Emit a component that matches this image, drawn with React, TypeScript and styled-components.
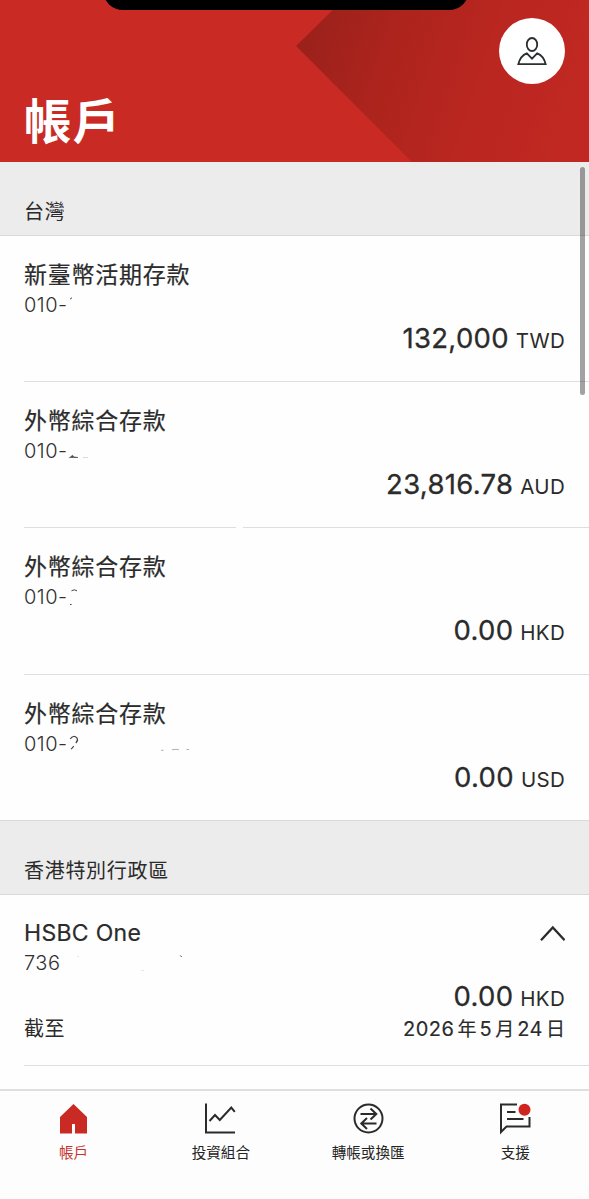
import React from "react";
import styled, { createGlobalStyle } from "styled-components";

const GlobalStyle = createGlobalStyle`
  *, *::before, *::after { box-sizing: border-box; }
  body {
    margin: 0;
    background: #fff;
    color: #2b2b2b;
    font-family: Inter, "Noto Sans CJK TC", sans-serif;
  }
`;

const Screen = styled.main`
  position: relative;
  width: 589px;
  height: 1199px;
  display: flex;
  flex-direction: column;
  overflow: hidden;
  background: #fefefe;
`;

const Header = styled.header`
  position: relative;
  flex: none;
  height: 162px;
  display: flex;
  flex-direction: column;
  justify-content: flex-end;
  padding: 0 24px 10px;
  background: #c92a24;
`;

const HeaderFacet = styled.svg`
  position: absolute;
  inset: 0;
`;

const Island = styled.div`
  position: absolute;
  top: -30px;
  left: 103px;
  width: 366px;
  height: 40px;
  border-radius: 20px;
  background: #000;
`;

const ProfileButton = styled.button`
  position: absolute;
  top: 18px;
  right: 24px;
  width: 66px;
  height: 66px;
  display: grid;
  place-items: center;
  padding: 0;
  border: 0;
  border-radius: 50%;
  background: #fff;
`;

const PageTitle = styled.h1`
  position: relative;
  margin: 0;
  font-size: 47.5px;
  line-height: 60px;
  font-weight: 700;
  letter-spacing: 1px;
  color: #fff;
`;

const SectionHeader = styled.h2<{ $divided?: boolean }>`
  flex: none;
  height: ${(p) => (p.$divided ? 75 : 74)}px;
  margin: 0;
  padding: 35px 24px 0;
  border-top: ${(p) => (p.$divided ? "1px solid #d9d9db" : "0")};
  border-bottom: 1px solid #d9d9db;
  background: #ececec;
  font-size: 20px;
  line-height: 30px;
  font-weight: 400;
  letter-spacing: 0.7px;
`;

const AccountRow = styled.section<{ $height: number }>`
  flex: none;
  height: ${(p) => p.$height}px;
  margin-left: 24px;
  display: flex;
  flex-direction: column;
`;

const RowBody = styled.div<{ $top?: number }>`
  flex: 1;
  padding: ${(p) => p.$top ?? 23}px 24px 0 0;
`;

const Divider = styled.div<{ $broken?: boolean }>`
  height: 1px;
  background: ${(p) =>
    p.$broken
      ? "linear-gradient(90deg, #dedee0 212px, transparent 212px, transparent 219px, #dedee0 219px)"
      : "#dedee2"};
`;

const NameLine = styled.div`
  height: 32px;
  display: flex;
  align-items: center;
  justify-content: space-between;
`;

const AccountName = styled.h3<{ $latin?: boolean }>`
  margin: 0;
  font-size: 23px;
  line-height: 32px;
  font-weight: 400;
  -webkit-text-stroke: 0.2px currentColor;
  letter-spacing: ${(p) => (p.$latin ? 0.3 : 0.75)}px;
  white-space: nowrap;
`;

const AccountNumber = styled.div`
  display: flex;
  height: 29px;
  font-size: 20px;
  line-height: 29px;
  font-weight: 300;
  color: #303030;
`;

const Prefix = styled.span`
  width: 45px;
  letter-spacing: 0.5px;
  white-space: nowrap;
`;

const Balance = styled.div`
  height: 37px;
  display: flex;
  align-items: baseline;
  justify-content: flex-end;
  gap: 7px;
  line-height: 36px;
`;

const Amount = styled.span`
  font-size: 27.5px;
  font-weight: 400;
  -webkit-text-stroke: 0.3px currentColor;
  letter-spacing: 0.3px;
`;

const Currency = styled.span`
  font-size: 20.5px;
  font-weight: 400;
  letter-spacing: 0.3px;
`;

const AsOf = styled.div`
  height: 30px;
  display: flex;
  justify-content: space-between;
  font-size: 20px;
  line-height: 29px;
  letter-spacing: 0.6px;
`;

const DateText = styled.span`
  display: flex;
  gap: 3px;
  font-weight: 400;
  -webkit-text-stroke: 0.15px currentColor;
  letter-spacing: 0.5px;
`;

const DateUnit = styled.span`
  font-size: 19px;
  letter-spacing: 0;
`;

const TabBar = styled.nav`
  flex: none;
  margin-top: auto;
  height: 110px;
  padding-top: 12px;
  border-top: 2px solid #dfdfdf;
  background: #fdfdfd;
  display: grid;
  grid-template-columns: repeat(4, 1fr);
`;

const Tab = styled.div<{ $active?: boolean }>`
  display: flex;
  flex-direction: column;
  align-items: center;
  font-size: 14.6px;
  line-height: 22px;
  font-weight: 400;
  color: ${(p) => (p.$active ? "#c8322b" : "#242424")};
`;

const TabIcon = styled.svg`
  width: 32px;
  height: 32px;
  margin-bottom: 7px;
  fill: none;
  stroke: #2b2b2b;
  stroke-width: 2;
`;

const ScrollThumb = styled.div`
  position: absolute;
  top: 167px;
  left: 580px;
  width: 5px;
  height: 228px;
  border-radius: 3px;
  background: rgba(0, 0, 0, 0.36);
`;

/* Strokes left visible of the masked digits, beside the number's prefix. */
const Remnant = styled.svg`
  fill: none;
  stroke: #454545;
  stroke-width: 1;
`;

type Account = { name: string; number: string; amount: string; currency: string; mask: React.ReactNode };

const accounts: Account[] = [
  {
    name: "新臺幣活期存款",
    number: "010-",
    amount: "132,000",
    currency: "TWD",
    mask: <path d="M1 8.200l2-1.500" />,
  },
  {
    name: "外幣綜合存款",
    number: "010-",
    amount: "23,816.78",
    currency: "AUD",
    mask: (
      <>
        <path d="M0.500 20.800l3-2.600 1 1.600 4.500.700H0.500z" fill="#454545" strokeWidth="0.600" />
        <path d="M14 20.500h5" stroke="#dadada" />
      </>
    ),
  },
  {
    name: "外幣綜合存款",
    number: "010-",
    amount: "0.00",
    currency: "HKD",
    mask: <path d="M2.500 7.800q2.700-2 5.500 0M1 21.500h1.600" />,
  },
  {
    name: "外幣綜合存款",
    number: "010-",
    amount: "0.00",
    currency: "USD",
    mask: (
      <>
        <path d="M1.200 9Q4.500 4.500 8 8q1.500 2.500-1.200 5M4.800 16.200l-2.600 3" strokeWidth="1.200" />
        <path d="M92 20.300h2.500M103 19.800l4-.500 3 .500M117.500 19.500h2.500" stroke="#b0b0b0" />
      </>
    ),
  },
];

function Money({ amount, currency }: { amount: string; currency: string }) {
  return (
    <Balance>
      <Amount>{amount}</Amount>
      <Currency>{currency}</Currency>
    </Balance>
  );
}

export default function App() {
  return (
    <Screen>
      <GlobalStyle />
      <Header>
        <HeaderFacet width="589" height="162" viewBox="0 0 589 162">
          <defs>
            <linearGradient id="facet" gradientUnits="userSpaceOnUse" x1="300" y1="40" x2="570" y2="130">
              <stop offset="0" stopColor="#9b211b" />
              <stop offset="0.3" stopColor="#ac241d" />
              <stop offset="0.65" stopColor="#ba2620" />
              <stop offset="1" stopColor="#c12822" />
            </linearGradient>
          </defs>
          <path d="M343 0L296 46L412 162H589V0Z" fill="url(#facet)" />
        </HeaderFacet>
        <Island />
        <ProfileButton aria-label="個人檔案">
          <svg width="32" height="32" viewBox="0 0 32 32" fill="none" stroke="#2b2f30" strokeWidth="1.800">
            <ellipse cx="16" cy="9.500" rx="5.200" ry="6.500" />
            <path d="M2.300 29.200H29.700Q27.500 20.500 21.200 18.300L16 23.700L10.800 18.300Q4.500 20.500 2.300 29.200Z" />
          </svg>
        </ProfileButton>
        <PageTitle>帳戶</PageTitle>
      </Header>

      <SectionHeader>台灣</SectionHeader>
      {accounts.map((a, i) => (
        <AccountRow key={a.currency} $height={i === 3 ? 145.4 : 146.2}>
          <RowBody>
            <NameLine>
              <AccountName>{a.name}</AccountName>
            </NameLine>
            <AccountNumber>
              <Prefix>{a.number}</Prefix>
              <Remnant width="130" height="29">{a.mask}</Remnant>
            </AccountNumber>
            <Money amount={a.amount} currency={a.currency} />
          </RowBody>
          {i < 3 && <Divider $broken={i === 1} />}
        </AccountRow>
      ))}

      <SectionHeader $divided>香港特別行政區</SectionHeader>
      <AccountRow $height={171}>
        <RowBody $top={22.5}>
          <NameLine>
            <AccountName $latin>HSBC One</AccountName>
            <svg width="25" height="17" viewBox="0 0 25 17" fill="none" stroke="#2b2b2b" strokeWidth="2.300">
              <path d="M1 15.200L12.800 2.400L24.600 15.200" />
            </svg>
          </NameLine>
          <AccountNumber>
            <Prefix>736</Prefix>
            <Remnant width="130" height="29">
              <path d="M111.200 6.500l1.500 1.500" />
              <path d="M8 7.500h2M72 21.500h3" stroke="#e6e6e6" />
            </Remnant>
          </AccountNumber>
          <Money amount="0.00" currency="HKD" />
          <AsOf>
            <span>截至</span>
            <DateText>
              <span>2026</span>
              <DateUnit>年</DateUnit>
              <span>5</span>
              <DateUnit>月</DateUnit>
              <span>24</span>
              <DateUnit>日</DateUnit>
            </DateText>
          </AsOf>
        </RowBody>
        <Divider />
      </AccountRow>

      <TabBar>
        <Tab $active>
          <TabIcon viewBox="0 0 32 32">
            <path d="M15.500 1L29 14V30.500H17V21H14V30.500H2V14Z" fill="#c92a24" stroke="none" />
          </TabIcon>
          帳戶
        </Tab>
        <Tab>
          <TabIcon viewBox="0 0 32 32">
            <path d="M1 0.500V29.500H30M4.500 18L10 12L14.800 17L26.300 4.500L29.800 8.800" />
          </TabIcon>
          投資組合
        </Tab>
        <Tab>
          <TabIcon viewBox="0 0 32 32">
            <circle cx="16.500" cy="15.500" r="14" />
            <path d="M8.500 11H24.500M18.500 5.500L24.300 11L18.500 16.500M24.500 20.500H9.500M15 15L9.300 20.500L15 26" />
          </TabIcon>
          轉帳或換匯
        </Tab>
        <Tab>
          <TabIcon viewBox="0 0 32 32">
            <path d="M18 1.500H2V29L7.500 23.500H30.500V14M8 9H16.500M8 16H24.500" />
            <circle cx="25.500" cy="6.800" r="6" fill="#d0241f" stroke="none" />
          </TabIcon>
          支援
        </Tab>
      </TabBar>
      <ScrollThumb />
    </Screen>
  );
}
